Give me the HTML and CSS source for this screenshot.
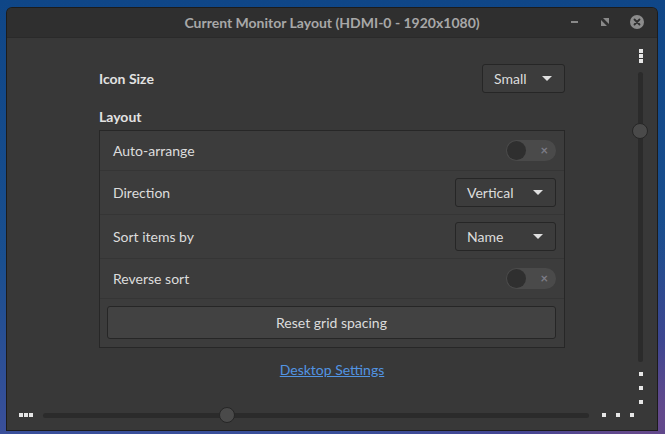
FILE: index.html
```html
<!DOCTYPE html>
<html>
<head>
<meta charset="utf-8">
<link rel="stylesheet" href="styles.css">
</head>
<body>
<div class="window">
  <div class="titlebar">
    <div class="title">Current Monitor Layout (HDMI-0 - 1920x1080)</div>
    <div class="wm-buttons">
      <span class="wm-min"></span>
      <svg class="wm-max" width="8" height="8" viewBox="0 0 8 8"><path d="M2 0H8V6Z M0 2V8H6Z" fill="#8a8a8a"/></svg>
      <span class="wm-close"><svg width="14" height="14" viewBox="0 0 14 14"><path d="M4.5 4.5L9.5 9.5M9.5 4.5L4.5 9.5" stroke="#2e2e2e" stroke-width="1.8" stroke-linecap="round"/></svg></span>
    </div>
  </div>
  <div class="client">
    <div class="viewport">
      <div class="content">
        <div class="top-row">
          <span class="heading">Icon Size</span>
          <div class="dropdown small-dd"><span>Small</span><span class="caret"></span></div>
        </div>
        <div class="heading layout-h">Layout</div>
        <div class="frame">
          <div class="row row-short">
            <span>Auto-arrange</span>
            <div class="toggle"><span class="knob"></span><span class="x">×</span></div>
          </div>
          <div class="row row-tall">
            <span>Direction</span>
            <div class="dropdown wide-dd"><span>Vertical</span><span class="caret"></span></div>
          </div>
          <div class="row row-tall">
            <span>Sort items by</span>
            <div class="dropdown wide-dd"><span>Name</span><span class="caret"></span></div>
          </div>
          <div class="row row-short">
            <span>Reverse sort</span>
            <div class="toggle"><span class="knob"></span><span class="x">×</span></div>
          </div>
          <div class="button-row">
            <div class="button">Reset grid spacing</div>
          </div>
        </div>
        <div class="link-row"><a class="link">Desktop Settings</a></div>
      </div>
      <div class="vscroll">
        <div class="dots-stack"><i></i><i></i><i></i></div>
        <div class="vtrack"><span class="vthumb"></span></div>
        <div class="dots-spread-v"><i></i><i></i><i></i></div>
      </div>
    </div>
    <div class="hscroll">
      <div class="dots-row"><i></i><i></i><i></i></div>
      <div class="htrack"><span class="hthumb"></span></div>
      <div class="dots-spread-h"><i></i><i></i><i></i></div>
    </div>
  </div>
</div>
</body>
</html>
```
FILE: styles.css
```css
html, body {
  margin: 0;
  padding: 0;
}
body {
  width: 665px;
  height: 434px;
  overflow: hidden;
  background: radial-gradient(ellipse 300px 200px at 640px 420px, #6a4a8a 0%, rgba(80,60,140,0.5) 40%, rgba(0,0,0,0) 100%),
              linear-gradient(180deg, #0f4687 0%, #1a4f8f 60%, #3a4f9a 100%);
  font-family: "Lato", "Noto Sans", sans-serif;
  font-size: 14px;
  color: #dcdcdc;
}
.window {
  margin: 8px 0 0 7px;
  width: 650px;
  height: 422px;
  background: #383838;
  border-radius: 5px 5px 0 0;
  box-shadow: 0 0 0 1px #1c1c1c;
  display: flex;
  flex-direction: column;
  overflow: hidden;
}
.titlebar {
  height: 29px;
  background: #2f2f2f;
  border-bottom: 1px solid #2a2a2a;
  display: flex;
  align-items: center;
  justify-content: center;
  position: relative;
  flex: none;
}
.title {
  color: #a8a8a8;
  font-size: 14px;
  font-weight: bold;
}
.wm-buttons {
  position: absolute;
  right: 13px;
  top: 7px;
  display: flex;
  align-items: center;
  gap: 21px;
}
.wm-min {
  width: 7px;
  height: 2px;
  background: #8a8a8a;
  margin-right: 2px;
}
.wm-close {
  width: 14px;
  height: 14px;
  border-radius: 50%;
  background: #8c8c8c;
  display: flex;
}
.client {
  flex: 1;
  display: flex;
  flex-direction: column;
}
.viewport {
  flex: 1;
  display: flex;
}
.content {
  flex: 1;
  padding: 26px 0 0 92px;
  box-sizing: border-box;
}
.top-row {
  width: 466px;
  display: flex;
  justify-content: space-between;
  align-items: center;
}
.heading {
  font-weight: bold;
  color: #e2e2e2;
}
.layout-h {
  margin-top: 14px;
  height: 22px;
  line-height: 20px;
}
.dropdown {
  box-sizing: border-box;
  height: 29px;
  border: 1px solid #262626;
  border-radius: 3px;
  background: #3c3c3c;
  display: flex;
  align-items: center;
  justify-content: space-between;
  padding: 0 12px 0 11px;
  color: #dcdcdc;
}
.small-dd {
  width: 83px;
}
.wide-dd {
  width: 101px;
}
.caret {
  width: 0;
  height: 0;
  border-left: 5px solid transparent;
  border-right: 5px solid transparent;
  border-top: 5px solid #e0e0e0;
}
.frame {
  width: 466px;
  box-sizing: border-box;
  border: 1px solid #272727;
  background: #3c3c3c;
  margin-top: 1px;
}
.row {
  display: flex;
  align-items: center;
  justify-content: space-between;
  padding: 0 8px 0 13px;
  border-bottom: 1px solid #353535;
}
.row-short {
  height: 39px;
}
.row-tall {
  height: 43px;
}
.toggle {
  width: 50px;
  height: 21px;
  border-radius: 11px;
  background: #4a4a4a;
  display: flex;
  align-items: center;
  justify-content: space-between;
  box-sizing: border-box;
  padding: 0 8px 0 1px;
}
.knob {
  width: 19px;
  height: 19px;
  border-radius: 50%;
  background: #2f2f2f;
}
.x {
  color: #7c7c86;
  font-size: 13px;
  font-weight: bold;
  line-height: 1;
}
.button-row {
  padding: 7px 8px 8px 7px;
}
.button {
  height: 33px;
  box-sizing: border-box;
  border: 1px solid #262626;
  border-radius: 3px;
  background: #424242;
  display: flex;
  align-items: center;
  justify-content: center;
  color: #dcdcdc;
}
.link-row {
  width: 466px;
  text-align: center;
  margin-top: 13px;
}
.link {
  color: #5294e2;
  text-decoration: underline;
}
.vscroll {
  width: 26px;
  flex: none;
  display: flex;
  flex-direction: column;
  align-items: center;
  padding-top: 11px;
  box-sizing: border-box;
  margin-right: 4px;
}
.vscroll i, .hscroll i {
  display: block;
  width: 4px;
  height: 4px;
  background: #e6e6e6;
}
.dots-stack {
  display: flex;
  flex-direction: column;
  gap: 1px;
  margin-left: 1px;
}
.vtrack {
  width: 5px;
  height: 290px;
  background: #2b2b2b;
  border-radius: 3px;
  margin-top: 9px;
  position: relative;
}
.vthumb {
  position: absolute;
  left: -6px;
  top: 51px;
  width: 16px;
  height: 16px;
  border-radius: 50%;
  background: #4a4a4a;
  border: 1px solid #262626;
  box-sizing: border-box;
}
.dots-spread-v {
  display: flex;
  flex-direction: column;
  gap: 10px;
  margin-top: 10px;
  margin-left: 1px;
}
.hscroll {
  height: 30px;
  flex: none;
  display: flex;
  align-items: center;
  padding: 0 0 8px 12px;
  box-sizing: border-box;
}
.dots-row {
  display: flex;
  gap: 1px;
}
.htrack {
  width: 546px;
  height: 5px;
  background: #2b2b2b;
  border-radius: 3px;
  margin-left: 10px;
  position: relative;
}
.hthumb {
  position: absolute;
  left: 176px;
  top: -6px;
  width: 16px;
  height: 16px;
  border-radius: 50%;
  background: #4a4a4a;
  border: 1px solid #262626;
  box-sizing: border-box;
}
.dots-spread-h {
  display: flex;
  gap: 10px;
  margin-left: 13px;
}
```
